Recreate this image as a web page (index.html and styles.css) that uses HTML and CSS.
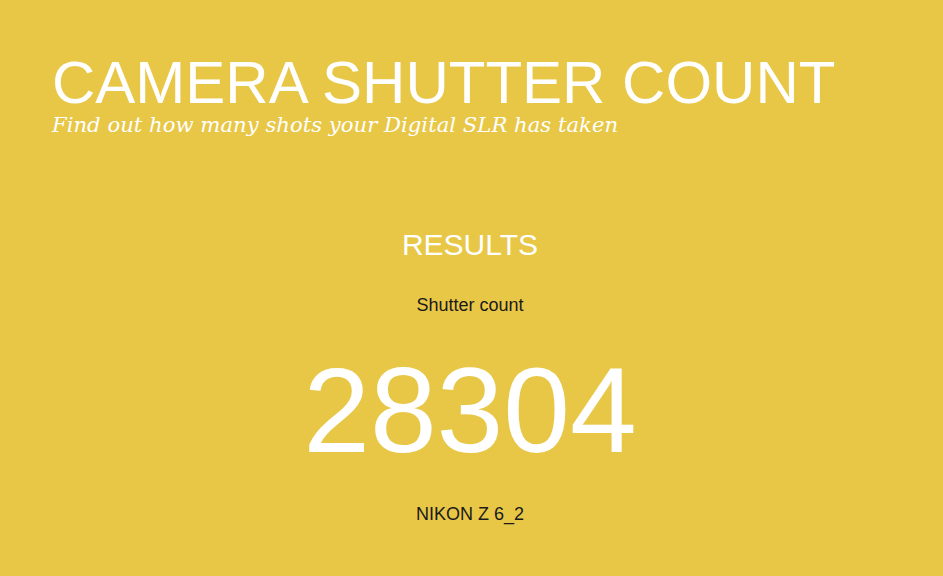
FILE: index.html
```html
<!DOCTYPE html>
<html>
<head>
<meta charset="utf-8">
<link rel="stylesheet" href="styles.css">
</head>
<body>
<header class="header">
  <h1 class="title">CAMERA SHUTTER COUNT</h1>
  <p class="subtitle">Find out how many shots your Digital SLR has taken</p>
</header>
<main class="results">
  <h2 class="results-title">RESULTS</h2>
  <p class="label">Shutter count</p>
  <p class="count">28304</p>
  <p class="model">NIKON Z 6_2</p>
</main>
</body>
</html>
```

FILE: styles.css
```css
html, body {
  margin: 0;
  padding: 0;
  background: #e8c747;
  font-family: "Liberation Sans", Arial, sans-serif;
  width: 943px;
  height: 576px;
  overflow: hidden;
}
.header {
  padding: 52px 0 0 52px;
}
.title {
  margin: 0;
  font-weight: normal;
  font-size: 60px;
  line-height: 61px;
  color: #fff;
}
.subtitle {
  margin: 0;
  font-family: "DejaVu Serif", Georgia, serif;
  font-style: italic;
  font-size: 21.2px;
  line-height: 24px;
  color: #fff;
}
.results {
  display: flex;
  flex-direction: column;
  align-items: center;
  padding-top: 91px;
  padding-right: 3px;
}
.results-title {
  margin: 0;
  font-weight: normal;
  font-size: 30px;
  line-height: 34px;
  color: #fff;
}
.label {
  margin: 33px 0 0;
  font-size: 18px;
  line-height: 20px;
  color: #1a1a1a;
}
.count {
  margin: 35px 0 0;
  font-size: 120px;
  line-height: 120px;
  color: #fff;
}
.model {
  margin: 34px 0 0;
  font-size: 18px;
  line-height: 20px;
  color: #1a1a1a;
}
```
